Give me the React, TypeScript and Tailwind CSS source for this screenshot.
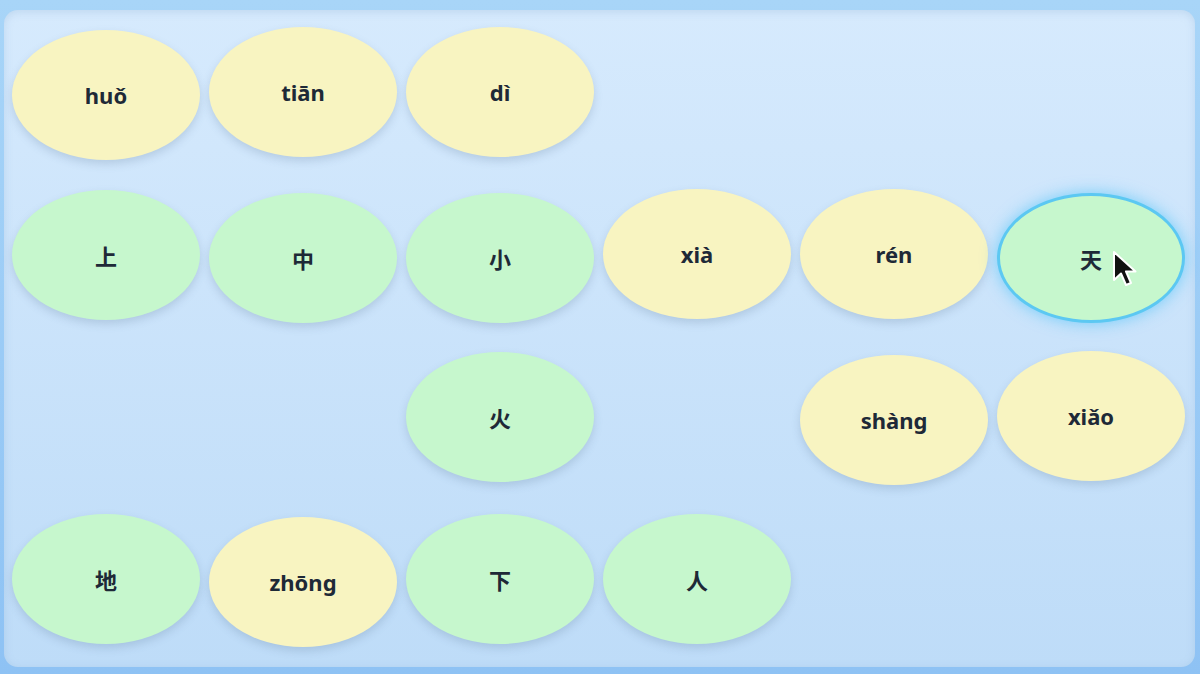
const cells: ({ text: string; kind: "py" | "hz"; dy: number; active?: boolean } | null)[] = [
  { text: "huǒ", kind: "py", dy: 2 },
  { text: "tiān", kind: "py", dy: -1 },
  { text: "dì", kind: "py", dy: -1 },
  null,
  null,
  null,
  { text: "上", kind: "hz", dy: 0 },
  { text: "中", kind: "hz", dy: 3 },
  { text: "小", kind: "hz", dy: 3 },
  { text: "xià", kind: "py", dy: -1 },
  { text: "rén", kind: "py", dy: -1 },
  { text: "天", kind: "hz", dy: 3, active: true },
  null,
  null,
  { text: "火", kind: "hz", dy: 0 },
  null,
  { text: "shàng", kind: "py", dy: 3 },
  { text: "xiǎo", kind: "py", dy: -1 },
  { text: "地", kind: "hz", dy: 0 },
  { text: "zhōng", kind: "py", dy: 3 },
  { text: "下", kind: "hz", dy: 0 },
  { text: "人", kind: "hz", dy: 0 },
  null,
  null,
];

function Cursor() {
  return (
    <svg
      className="absolute left-[112px] top-[54px]"
      width="26"
      height="38"
      viewBox="0 0 26 38"
    >
      <path
        d="M2 2 L2 30 L9 23.5 L14 35 L19 33 L14 21.5 L23.5 21.5 Z"
        fill="#111"
        stroke="#fff"
        strokeWidth="2"
        strokeLinejoin="round"
      />
    </svg>
  );
}

export default function App() {
  return (
    <main className="w-[1200px] h-[674px] bg-gradient-to-b from-[#a8d5f8] to-[#8ec2f4] pt-[10px] pl-[4px] pr-[5px] pb-[7px] overflow-hidden">
      <div className="h-full rounded-[14px] bg-gradient-to-b from-[#d6eafd] to-[#bedcf8] shadow-[inset_0_2px_8px_rgba(120,160,200,0.25)] pl-[8px] pt-[18px]">
        <div className="grid grid-cols-[repeat(6,188px)] grid-rows-[repeat(4,130px)] gap-x-[9px] gap-y-[32px]">
          {cells.map((c, i) =>
            c ? (
              <div
                key={i}
                style={{ transform: `translateY(${c.dy}px)` }}
                className={
                  "relative flex items-center justify-center rounded-[50%] " +
                  (c.kind === "py" ? "bg-[#f8f4c1]" : "bg-[#c6f7cd]") +
                  (c.active
                    ? " border-[3px] border-[#5cc8f2] shadow-[0_0_16px_rgba(56,189,248,0.6)]"
                    : " shadow-[0_4px_8px_rgba(80,110,140,0.22)]")
                }
              >
                <span
                  className={
                    "font-bold text-[#1e2937] leading-none " +
                    (c.kind === "py"
                      ? "text-[22px] font-['Noto_Sans',sans-serif]"
                      : "text-[22px] font-['Noto_Sans_CJK_SC',sans-serif]")
                  }
                >
                  {c.text}
                </span>
                {c.active && <Cursor />}
              </div>
            ) : (
              <div key={i} />
            )
          )}
        </div>
      </div>
    </main>
  );
}
